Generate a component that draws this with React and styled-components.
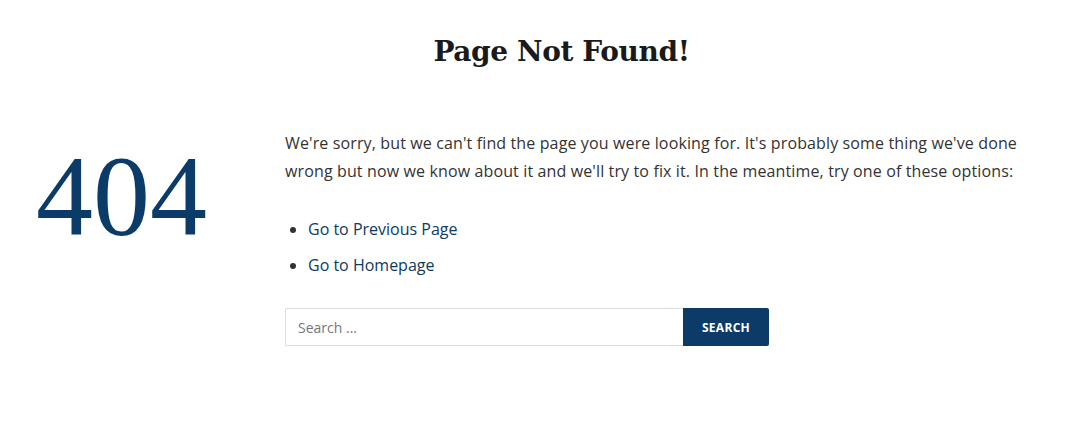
import React from "react";
import styled, { createGlobalStyle } from "styled-components";

const GlobalStyle = createGlobalStyle`
  body {
    margin: 0;
    background: #fff;
    font-family: "Open Sans", "Liberation Sans", Arial, sans-serif;
  }
`;

const Page = styled.div`
  width: 1081px;
  padding-top: 30px;
`;

const Heading = styled.h1`
  margin: 0;
  padding-left: 42px;
  text-align: center;
  font-family: "DejaVu Serif", "Liberation Serif", serif;
  font-weight: 700;
  font-size: 28px;
  line-height: 44px;
  color: #1a1a1a;
  letter-spacing: -0.4px;
`;

const Body = styled.div`
  display: grid;
  grid-template-columns: 245px 1fr;
  column-gap: 40px;
  margin-top: 55px;
`;

const Code = styled.div`
  padding-top: 7px;
  text-align: right;
  padding-right: 38px;
  font-family: "Liberation Serif", "Times New Roman", serif;
  font-size: 114px;
  line-height: 122px;
  color: #0b3c69;
  letter-spacing: 0px;
`;

const Content = styled.div`
  font-size: 16px;
  color: #333;
`;

const Text = styled.p`
  margin: 0;
  line-height: 28px;
  width: 760px;
  letter-spacing: 0.13px;
`;

const Options = styled.ul`
  margin: 32px 0 0;
  padding-left: 23px;
  list-style: disc;
`;

const Option = styled.li`
  line-height: 24px;
  margin-bottom: 12px;
  &::marker {
    color: #333;
  }
`;

const Link = styled.a`
  color: #0d3a5f;
  text-decoration: none;
`;

const SearchForm = styled.form`
  display: flex;
  margin-top: 31px;
`;

const SearchInput = styled.input`
  box-sizing: border-box;
  width: 398px;
  height: 38px;
  border: 1px solid #dcdcdc;
  border-right: none;
  border-radius: 2px 0 0 2px;
  padding: 0 12px;
  font-family: inherit;
  font-size: 14px;
  color: #333;
  outline: none;
  &::placeholder {
    color: #777;
  }
`;

const SearchButton = styled.button`
  box-sizing: border-box;
  width: 86px;
  height: 38px;
  border: none;
  border-radius: 0 2px 2px 0;
  background: #0b3b66;
  color: #fff;
  font-family: inherit;
  font-weight: 700;
  font-size: 12px;
  letter-spacing: 0.3px;
  cursor: pointer;
`;

export default function App() {
  return (
    <Page>
      <GlobalStyle />
      <Heading>Page Not Found!</Heading>
      <Body>
        <Code>404</Code>
        <Content>
          <Text>
            We're sorry, but we can't find the page you were looking for. It's
            probably some thing we've done wrong but now we know about it and
            we'll try to fix it. In the meantime, try one of these options:
          </Text>
          <Options>
            <Option>
              <Link href="#">Go to Previous Page</Link>
            </Option>
            <Option>
              <Link href="#">Go to Homepage</Link>
            </Option>
          </Options>
          <SearchForm onSubmit={(e) => e.preventDefault()}>
            <SearchInput type="search" placeholder="Search ..." />
            <SearchButton type="submit">SEARCH</SearchButton>
          </SearchForm>
        </Content>
      </Body>
    </Page>
  );
}
